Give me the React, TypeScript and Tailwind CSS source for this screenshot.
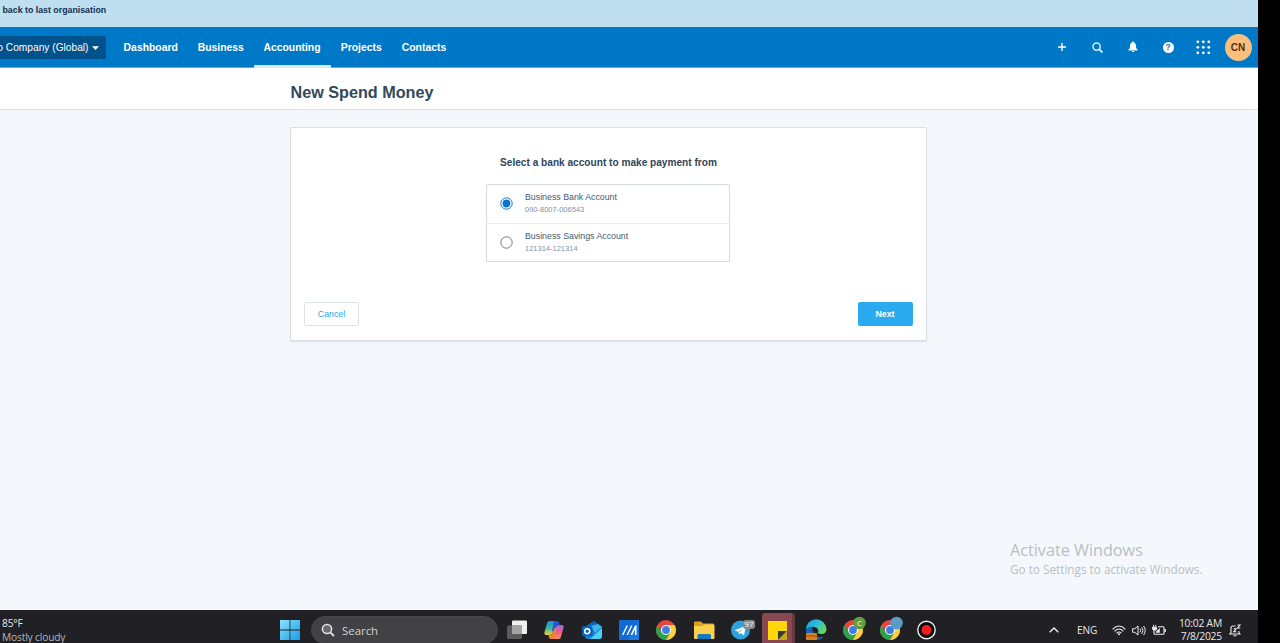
import React, { useState } from "react";

const NAV = [
  { label: "Dashboard", box: "w-[74.5px]" },
  { label: "Business", box: "w-[65.5px]" },
  { label: "Accounting", box: "w-[77px]" },
  { label: "Projects", box: "w-[61.5px]" },
  { label: "Contacts", box: "w-[64px]" },
];

const ACCOUNTS = [
  { name: "Business Bank Account", number: "090-8007-006543" },
  { name: "Business Savings Account", number: "121314-121314" },
];

function TopNav() {
  return (
    <nav className="flex h-[41px] shrink-0 items-stretch border-b border-[#5eaae0] bg-[#0078c8] text-white">
      <div className="mt-[9px] flex h-[23px] w-[105.500px] shrink-0 items-center justify-end rounded-r-[2px] bg-[#00528c] pr-[7px]">
        <span className="whitespace-nowrap text-[10.2px] leading-[12px]">o Company (Global)</span>
        <svg className="ml-[3px] shrink-0" width="7" height="4" viewBox="0 0 7 4">
          <path d="M0 0.200h7L3.5 3.900z" fill="#fff" />
        </svg>
      </div>
      <div className="ml-[8px] flex">
        {NAV.map((item) => (
          <div key={item.label} className={"relative flex justify-center pt-[14px] " + item.box}>
            <span className="text-[10.4px] font-bold leading-[13px]">{item.label}</span>
            {item.label === "Accounting" && <span className="absolute inset-x-0 -bottom-px h-[3px] rounded-t-[1px] bg-[#d5ebf8]" />}
          </div>
        ))}
      </div>
      <div className="ml-auto flex items-center pr-[6.500px]">
        <svg className="mr-[25px]" width="10" height="10" viewBox="0 0 10 10" stroke="#fff" strokeWidth="1.4">
          <path d="M5 1v8M1 5h8" />
        </svg>
        <svg className="mr-[25px]" width="11" height="11" viewBox="0 0 11 11" fill="none" stroke="#d9edfa" strokeWidth="1.5">
          <circle cx="4.6" cy="4.6" r="3.6" />
          <path d="M7.2 7.2l3.2 3.4" strokeWidth="1.9" />
        </svg>
        <svg className="mr-[25px]" width="10" height="12" viewBox="0 0 10 12" fill="#fff">
          <path d="M5 .5c.7 0 1 .5 1 1C7.4 2 8 3.2 8 5c0 2 .5 2.9 1.5 3.8v.8h-9v-.8C1.500 7.900 2 7 2 5c0-1.800.6-3 2-3.500 0-.5.3-1 1-1zM3.800 10.100h2.400c0 .8-.5 1.200-1.200 1.200s-1.200-.4-1.200-1.200z" />
        </svg>
        <span className="mr-[22px] flex size-[11px] items-center justify-center rounded-full bg-white text-[9px] font-bold leading-[11px] text-[#0078c8]">?</span>
        <svg className="mr-[14px]" width="15" height="15" viewBox="0 0 15 15" fill="#fff">
          {[1.8, 7.3, 12.8].map((y) => [1.8, 7.3, 12.8].map((x) => <circle key={x + "-" + y} cx={x} cy={y} r="1.4" />))}
        </svg>
        <span className="flex size-[27px] items-center justify-center rounded-full bg-[#fcbe7c] text-[10px] font-bold text-[#51320f]">CN</span>
      </div>
    </nav>
  );
}

function PaymentCard() {
  const [selected, setSelected] = useState(0);
  return (
    <section className="ml-[290px] mt-[17px] flex h-[214px] w-[637px] flex-col rounded-[2px] border border-[#d9e1e7] bg-white shadow-[0_1px_1px_rgba(0,10,30,0.1)]">
      <h2 className="mt-[28px] text-center text-[10.12px] font-bold leading-[13px] text-[#30455a]">Select a bank account to make payment from</h2>
      <div className="ml-[195px] mt-[15px] h-[78px] w-[244px] rounded-[1px] border border-[#d6dbe0]">
        {ACCOUNTS.map((a, i) => (
          <div key={a.name} onClick={() => setSelected(i)} className={"flex items-center pl-[13px] " + (i === 0 ? "h-[39px] border-b border-[#e8edf1] pb-[1px]" : "h-[37px]")}>
            <svg width="13" height="13" viewBox="0 0 13 13">
              <circle cx="6.500" cy="6.500" r="5.700" fill="#fff" stroke={selected === i ? "#0c78cf" : "#777"} />
              {selected === i && <circle cx="6.500" cy="6.500" r="3.900" fill="#0474cd" />}
            </svg>
            <div className="ml-[12px]">
              <div className="text-[8.8px] leading-[13px] text-[#455b70]">{a.name}</div>
              <div className="text-[7.5px] leading-[12px] text-[#8293a3]">{a.number}</div>
            </div>
          </div>
        ))}
      </div>
      <div className="mt-[40px] flex justify-between pl-[13px] pr-[13.500px]">
        <button className="h-[24px] w-[55px] rounded-[2px] border border-[#dce3e8] pt-[1px] text-[8.8px] text-[#34a5e8]">Cancel</button>
        <button className="h-[24px] w-[55px] rounded-[2px] bg-[#2aaaf0] pt-[1px] text-[8.8px] font-bold text-white">Next</button>
      </div>
    </section>
  );
}

function Chrome() {
  return (
    <>
      <circle cx="10" cy="10" r="10" fill="#e8453c" />
      <path d="M1.340 5A10 10 0 0 0 10 20L14.330 12.500 10 10 5.670 12.500z" fill="#2ba24c" />
      <path d="M10 20A10 10 0 0 0 18.660 5H10L14.330 12.500z" fill="#fdd13a" />
      <circle cx="10" cy="10" r="5" fill="#fff" />
      <circle cx="10" cy="10" r="3.900" fill="#3c7eea" />
    </>
  );
}

function AppIcon({ children }: { children: React.ReactNode }) {
  return (
    <div className="flex w-[37.3px] shrink-0 items-center justify-center">
      <svg width="20" height="20" viewBox="0 0 20 20" overflow="visible">{children}</svg>
    </div>
  );
}

function TaskApps() {
  return (
    <>
      <AppIcon>
        <rect x="5" y="0.500" width="15" height="13.500" rx="1" fill="#efefef" />
        <rect x="0" y="5.500" width="15" height="13.500" rx="1" fill="#5a5a5a" />
        <path d="M5 5.500h10v8.500H5z" fill="#a4a4a4" />
      </AppIcon>
      <AppIcon>
        <defs>
          <linearGradient id="cpA" x1="0" y1="0" x2="0" y2="1"><stop stopColor="#1d8fe8" /><stop offset=".5" stopColor="#35b8a0" /><stop offset="1" stopColor="#f0ce38" /></linearGradient>
          <linearGradient id="cpB" x1="0" y1="0" x2="0" y2="1"><stop stopColor="#a06be0" /><stop offset=".5" stopColor="#ec5c8e" /><stop offset="1" stopColor="#f5904f" /></linearGradient>
        </defs>
        <path d="M5 1h8L9 12Q8 15 5 15H2Q0 15 .500 12L3 3.500Q3.500 1 5 1z" fill="url(#cpA)" />
        <path d="M15 19H7l4-11q1-3 4-3h3q2 0 1.500 3L17 16.500Q16.500 19 15 19z" fill="url(#cpB)" />
        <path d="M10 1h3q1.600 0 2 1.600L15.500 5Q12 5 11 8L9.500 12 8 11z" fill="#2458cf" />
        <path d="M10 19H7q-1.600 0-2-1.600L4.500 15Q8 15 9 12l1.500-4 1.500 1z" fill="#f0842f" />
      </AppIcon>
      <AppIcon>
        <path d="M3 7l9-6 8 6v9q0 3-3 3H6q-3 0-3-3z" fill="#1684d6" />
        <path d="M5 5.500L12 1l8 6-7 6-8-4z" fill="#1360ae" />
        <path d="M8 6l8-2 4 3-7 6z" fill="#3bb4ee" />
        <path d="M20 8v8q0 3-3 3H8z" fill="#4fd0f6" />
        <rect x="0" y="6" width="10.500" height="10.500" rx="2" fill="#0b62ba" />
        <circle cx="5.200" cy="11.200" r="2.500" fill="none" stroke="#fff" strokeWidth="1.500" />
      </AppIcon>
      <AppIcon>
        <rect width="20" height="20" fill="#126ad7" />
        <path d="M20 0v20L9 20z" fill="#1d83ea" opacity=".6" />
        <path d="M3 15L7.500 5.500H9L4.500 15zM7.500 15L12 5.500h1.500L9 15zM11.500 15L16 5.500h1.500V15H16V9.500L13.200 15z" fill="#fff" />
      </AppIcon>
      <AppIcon><Chrome /></AppIcon>
      <AppIcon>
        <path d="M0 2.500q0-1 1-1h6l2 2h10q1 0 1 1V8H0z" fill="#dfa021" />
        <path d="M0 6h8l2-1.500h9.500q1 0 1 1V18q0 1-1 1H1q-1 0-1-1z" fill="#fbd04d" />
        <path d="M3.500 19v-3.500q0-1.500 1.500-1.500h10.500q1.500 0 1.500 1.500V19z" fill="#147ac2" />
      </AppIcon>
      <AppIcon>
        <circle cx="9.500" cy="10" r="9.500" fill="#2da3dc" />
        <path d="M3.500 10.500L15 5.500 13 15.500 9.500 13 8 14.700 7.500 11.700z" fill="#fff" />
        <path d="M7.500 11.500l5-4-3.500 5z" fill="#9dcfe8" />
        <rect x="12" y="0" width="12" height="9" rx="3" fill="#858b8e" />
        <text x="18" y="7.300" textAnchor="middle" fontSize="8" fill="#fff">97</text>
      </AppIcon>
      <div className="flex w-[37.3px] shrink-0 items-center justify-center">
        <div className="flex h-[34px] w-[33px] items-center justify-center rounded-[3px] border-r-[3px] border-[#653840] bg-[#884852]">
          <svg className="ml-[2px]" width="19" height="19" viewBox="0 0 19 19">
            <path d="M0 0h19v10l-9 9H0z" fill="#ffd60a" />
            <path d="M10 10h9l-9 9z" fill="#3a3a35" />
            <path d="M19 10v9h-9z" fill="#c7a812" />
          </svg>
        </div>
      </div>
      <AppIcon>
        <defs>
          <linearGradient id="edge" x1="0" y1="0" x2="1" y2=".6"><stop stopColor="#1d9de0" /><stop offset=".5" stopColor="#29bce0" /><stop offset="1" stopColor="#66d65a" /></linearGradient>
        </defs>
        <path d="M0 10A10 10 0 0 1 20.500 9q0 5-5 5-3 0-4-1.500 1.500-2 0-4Q9 6 5 7 1 8 0 10z" fill="url(#edge)" />
        <path d="M0 10Q2 6 7 6.800 5 11 8 14.500 12 18.500 18 16.500 15 20 10 20 0 19 0 10z" fill="#1668bd" />
        <rect x="0" y="13" width="11" height="7" rx="1" fill="#d9811f" />
        <path d="M3.500 13v-1.500h4V13M0 16h11" stroke="#804413" strokeWidth=".8" fill="none" />
      </AppIcon>
      <AppIcon>
        <Chrome />
        <circle cx="16.500" cy="3" r="6.300" fill="#629b42" />
        <text x="16.500" y="6" textAnchor="middle" fontSize="8" fill="#fff">C</text>
      </AppIcon>
      <AppIcon>
        <Chrome />
        <circle cx="16.500" cy="3" r="6.300" fill="#5b9bc8" />
      </AppIcon>
      <AppIcon>
        <circle cx="9.500" cy="10" r="8.700" fill="#0b0b0b" stroke="#eee" strokeWidth="1.400" />
        <circle cx="9.500" cy="10" r="5" fill="#f01c20" />
      </AppIcon>
    </>
  );
}

function Taskbar() {
  return (
    <footer className="h-[33px] shrink-0 overflow-hidden bg-[#212024] font-['Open_Sans','Noto_Sans',sans-serif] text-[#e8e8e8]">
      <div className="flex h-[40px] w-full">
        <div className="w-[280px] shrink-0 pl-[2px] pt-[6px] text-[10.2px] leading-[14px] tracking-[-0.15px]">
          <div>85°F</div>
          <div className="text-[#b5b5b8]">Mostly cloudy</div>
        </div>
        <div className="flex w-[218.500px] shrink-0 items-center">
          <svg width="20" height="20" viewBox="0 0 20 20">
            <defs><linearGradient id="win" x1="0" y1="0" x2="1" y2="1"><stop stopColor="#8ae3fb" /><stop offset="1" stopColor="#169cec" /></linearGradient></defs>
            <path d="M0 0h9.600v9.600H0zM10.400 0H20v9.600h-9.600zM0 10.400h9.600V20H0zM10.400 10.400H20V20h-9.600z" fill="url(#win)" />
          </svg>
          <div className="ml-[11px] flex h-[28px] w-[187px] items-center rounded-full border border-[#48474b] bg-[#424145] pl-[9px]">
            <svg width="14" height="14" viewBox="0 0 14 14" fill="none" stroke="#e4e4e4" strokeWidth="1.500">
              <circle cx="6" cy="6" r="4.600" fill="#69686c" />
              <path d="M9.300 9.300l3.700 3.700" strokeWidth="1.800" />
            </svg>
            <span className="ml-[7px] pt-[1px] text-[11.4px] text-[#d2d2d4]">Search</span>
          </div>
        </div>
        <TaskApps />
        <div className="ml-auto flex shrink-0 items-center pr-[17px]">
          <svg className="mr-[18px]" width="10" height="6" viewBox="0 0 10 6" fill="none" stroke="#eee" strokeWidth="1.400"><path d="M.700 5.200L5 1l4.300 4.200" /></svg>
          <span className="mr-[15px] w-[20px] text-[10.1px] leading-[14px] tracking-[-0.1px]">ENG</span>
          <svg className="mr-[6px]" width="14" height="11" viewBox="0 0 14 11" fill="none" stroke="#eee" strokeWidth="1.100">
            <path d="M.600 4.300Q7-2.300 13.400 4.300M2.600 6.300q4.400-4.600 8.800 0M4.600 8.300q2.400-2.500 4.800 0" />
            <circle cx="7" cy="9.300" r="1" fill="#eee" stroke="none" />
          </svg>
          <svg className="mr-[6px]" width="14" height="11" viewBox="0 0 14 11" fill="none" stroke="#eee">
            <path d="M.600 3.700h2.200L6 1v9L2.800 7.300H.600zM8 3.700q1.300 1.800 0 3.600M9.800 2.300q2.400 3.200 0 6.400M11.600 1q3.200 4.500 0 9" />
          </svg>
          <svg className="mr-[12px]" width="14" height="12" viewBox="0 0 14 12" fill="none" stroke="#eee" strokeWidth="1.100">
            <path d="M6 2.800h5q1 0 1 1v5.400q0 1-1 1H3q-1 0-1-1V6.500M13.300 5v3" />
            <path d="M.500 3.200h4.200v1.600Q4.700 6.300 2.600 6.300.500 6.300.500 4.800zM1.500 3V.800M3.700 3V.800" fill="#eee" strokeWidth=".9" />
            <path d="M3.800 8.800V7.800L7.800 4v4.800z" fill="#eee" stroke="none" />
          </svg>
          <div className="mr-[7px] flex w-[44px] flex-col items-end whitespace-nowrap text-[10.3px] leading-[13px] tracking-[-0.2px]">
            <span>10:02 AM</span>
            <span>7/8/2025</span>
          </div>
          <svg width="12" height="13" viewBox="0 0 12 13" fill="none" stroke="#eee" strokeWidth="1.100">
            <path d="M6.500 2H4Q2 2 2 4v4.500L.700 10H11L9.900 8.500V7M4.500 11.800h3M8.500 1h2.500L8.500 4h2.800M4.700 4.800h2.500L4.700 7.800h2.700" />
          </svg>
        </div>
      </div>
    </footer>
  );
}

export default function App() {
  return (
    <div className="flex h-[643px] w-[1280px] overflow-hidden bg-black font-['Liberation_Sans',Arial,sans-serif]">
      <div className="relative flex w-[1258px] shrink-0 flex-col bg-[#f4f8fc]">
        <div className="h-[27px] shrink-0 bg-[#bfdef0] pl-[2.500px] pt-[4px] text-[8.8px] font-bold leading-[12px] text-[#14304c]">back to last organisation</div>
        <TopNav />
        <header className="h-[42px] shrink-0 border-b border-[#d8e2ea] bg-white pl-[290.500px] pt-[14px]">
          <h1 className="text-[16.2px] font-bold leading-[21px] text-[#33485c]">New Spend Money</h1>
        </header>
        <main className="flex-1">
          <PaymentCard />
        </main>
        <div className="pointer-events-none absolute left-[1010px] top-[540px] whitespace-nowrap font-['Open_Sans','Noto_Sans',sans-serif] text-[#b9bec3]">
          <div className="text-[16.2px] leading-[20px]">Activate Windows</div>
          <div className="text-[11.76px] leading-[19px]">Go to Settings to activate Windows.</div>
        </div>
        <Taskbar />
      </div>
    </div>
  );
}
